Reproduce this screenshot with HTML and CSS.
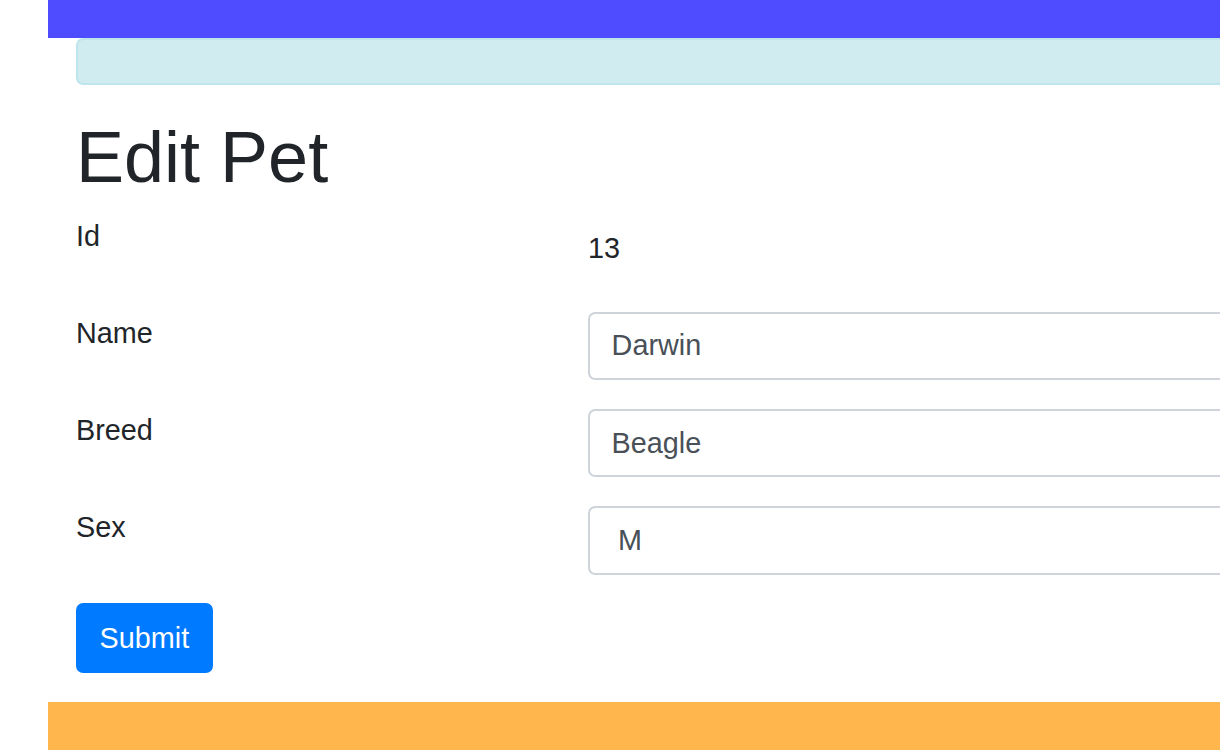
FILE: index.html
```html
<!DOCTYPE html>
<html lang="en">
<head>
<meta charset="utf-8">
<title>Edit Pet</title>
<link rel="stylesheet" href="styles.css">
</head>
<body>
<div class="page">
  <nav class="topbar"></nav>
  <main class="container">
    <div class="alert"></div>
    <h1 class="title">Edit Pet</h1>
    <form class="form">
      <div class="row">
        <label class="label-col">Id</label>
        <div class="field-col"><div class="plain">13</div></div>
      </div>
      <div class="row">
        <label class="label-col" for="name">Name</label>
        <div class="field-col"><input class="input" id="name" type="text" value="Darwin"></div>
      </div>
      <div class="row">
        <label class="label-col" for="breed">Breed</label>
        <div class="field-col"><input class="input" id="breed" type="text" value="Beagle"></div>
      </div>
      <div class="row">
        <label class="label-col" for="sex">Sex</label>
        <div class="field-col">
          <select class="input select" id="sex">
            <option>M</option>
            <option>F</option>
          </select>
        </div>
      </div>
      <button class="btn" type="submit">Submit</button>
    </form>
  </main>
  <footer class="footer"></footer>
</div>
</body>
</html>
```
FILE: styles.css
```css
html, body {
  margin: 0;
  padding: 0;
  overflow: hidden;
  background: #fff;
}
body {
  font-family: "Liberation Sans", Arial, sans-serif;
  font-size: 28.8px;
  line-height: 1.5;
  color: #212529;
}
.page {
  margin-left: 48px;
  width: 1800px;
}
.topbar {
  height: 38px;
  background: #4f4bff;
}
.container {
  padding: 0 28px;
}
.alert {
  height: 47px;
  box-sizing: border-box;
  margin: 0 0 28.8px;
  background: #d1ecf1;
  border: 2px solid #bee5eb;
  border-radius: 7.2px;
}
.title {
  font-size: 72px;
  font-weight: 500;
  line-height: 1.2;
  margin: 0 0 14.4px;
}
.form {
  margin: 0 0 29px;
}
.row {
  display: flex;
  margin-bottom: 28.8px;
}
.label-col {
  width: 512px;
  flex: none;
}
.field-col {
  flex: 1;
}
.plain {
  box-sizing: border-box;
  height: 68.4px;
  padding: 10.8px 0;
  border: solid transparent;
  border-width: 2px 0;
}
.input {
  display: block;
  width: 100%;
  box-sizing: border-box;
  height: 68.4px;
  margin: 0;
  padding: 10.8px 21.6px;
  font: inherit;
  line-height: 1.5;
  color: #495057;
  background: #fff;
  border: 2px solid #ced4da;
  border-radius: 7.2px;
}
.select {
  -webkit-appearance: none;
  appearance: none;
  padding-left: 28px;
}
.btn {
  display: inline-block;
  box-sizing: border-box;
  height: 70px;
  padding: 10.8px 21.6px;
  font: inherit;
  line-height: 1.5;
  color: #fff;
  background: #007bff;
  border: 2px solid #007bff;
  border-radius: 7.2px;
  vertical-align: top;
}
.footer {
  height: 80px;
  background: #ffb64c;
}
```
